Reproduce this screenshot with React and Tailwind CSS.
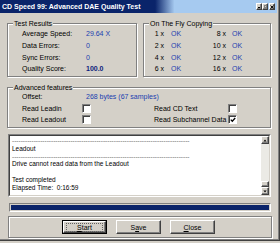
import React from 'react';

const Group = ({ label, className = '', children }) => (
  <div className={`relative border border-[#808080] shadow-[1px_1px_0_#ffffff,inset_1px_1px_0_#ffffff] ${className}`}>
    {label && (
      <span className="absolute left-[5px] top-[-5px] bg-[#d4d0c8] px-[1px] leading-[9px] whitespace-nowrap">{label}</span>
    )}
    {children}
  </div>
);

const Check = ({ checked }) => (
  <span className="w-[9px] h-[9px] bg-white border border-t-[#808080] border-l-[#808080] border-r-white border-b-white shadow-[inset_1px_1px_0_#404040] flex items-center justify-center">
    {checked && (
      <svg width="6" height="6" viewBox="0 0 6 6">
        <path d="M0.8 2.6 L2.3 4.2 L5.2 1" stroke="#000" strokeWidth="1.3" fill="none" />
      </svg>
    )}
  </span>
);

const Stat = ({ label, children }) => (
  <div className="flex items-center h-[11.7px]">
    <span className="w-[64px]">{label}</span>
    {children}
  </div>
);

const Speed = ({ a, b }) => (
  <div className="flex items-center h-[11.7px]">
    <span className="w-[20px] text-right">{a}</span>
    <span className="ml-[7px] w-[35px] text-[#2040b0]">OK</span>
    <span className="w-[20px] text-right">{b}</span>
    <span className="ml-[6px] text-[#2040b0]">OK</span>
  </div>
);

const Raised = ({ className = '', children }) => (
  <div className={`bg-[#d4d0c8] border border-t-white border-l-white border-r-[#404040] border-b-[#404040] shadow-[inset_-1px_-1px_0_#808080] flex items-center justify-center ${className}`}>
    {children}
  </div>
);

const dashes = '-'.repeat(82);

export default function App() {
  return (
    <div className="w-[280px] h-[243px] bg-[#d4d0c8] font-['Liberation_Sans',Arial,sans-serif] text-[7px] leading-[9px] text-black overflow-hidden">
      <div className="h-[241px] border-r border-b border-[#404040]">
        <div className="h-full border-r border-b border-[#808080] pr-[1px]">
          {/* title bar */}
          <div className="h-[13px] flex items-center pl-[2px] pr-[2px] bg-[linear-gradient(90deg,#0a246a_0%,#0a246a_56%,#a6caf0_63%,#a6caf0_100%)]">
            <span className="flex-1 text-white font-bold text-[7px] leading-none whitespace-nowrap">CD Speed 99: Advanced DAE Quality Test</span>
            <div className="flex items-center">
              <Raised className="w-[6px] h-[7px]">
                <span className="w-[2px] h-[1px] bg-black mt-[2px]" />
              </Raised>
              <Raised className="w-[6px] h-[7px]">
                <span className="w-[3px] h-[3px] border border-[#808080]" />
              </Raised>
              <Raised className="w-[6px] h-[7px] ml-[1px]">
                <svg width="4" height="4" viewBox="0 0 4 4">
                  <path d="M0.5 0.5 L3.5 3.5 M3.5 0.5 L0.5 3.5" stroke="#000" strokeWidth="0.9" />
                </svg>
              </Raised>
            </div>
          </div>

          {/* body */}
          <div className="pl-[7px] pr-[6px] pt-[10px] flex flex-col">
            <div className="flex gap-[6px]">
              <Group label="Test Results" className="w-[130px] h-[54px]">
                <div className="pt-[4px] pl-[14px] flex flex-col">
                  <Stat label="Average Speed:"><span className="text-[#2040b0]">29.64 X</span></Stat>
                  <Stat label="Data Errors:"><span className="text-[#2040b0]">0</span></Stat>
                  <Stat label="Sync Errors:"><span className="text-[#2040b0]">0</span></Stat>
                  <Stat label="Quality Score:"><span className="font-bold text-[#0c1c7c]">100.0</span></Stat>
                </div>
              </Group>
              <Group label="On The Fly Copying" className="flex-1 h-[54px]">
                <div className="pt-[4px] flex flex-col">
                  <Speed a="1 x" b="8 x" />
                  <Speed a="2 x" b="10 x" />
                  <Speed a="4 x" b="12 x" />
                  <Speed a="6 x" b="16 x" />
                </div>
              </Group>
            </div>

            <Group label="Advanced features" className="mt-[10px] h-[41px]">
              <div className="pt-[3px] flex flex-col">
                <div className="flex items-center h-[11.5px] pl-[14px]">
                  <span className="w-[64px]">Offset:</span>
                  <span className="text-[#2040b0]">268 bytes (67 samples)</span>
                </div>
                <div className="flex items-center h-[11.5px]">
                  <div className="w-[146px] flex items-center pl-[14px]">
                    <span className="w-[60px]">Read Leadin</span>
                    <Check />
                  </div>
                  <span className="w-[74px]">Read CD Text</span>
                  <Check />
                </div>
                <div className="flex items-center h-[11.5px]">
                  <div className="w-[146px] flex items-center pl-[14px]">
                    <span className="w-[60px]">Read Leadout</span>
                    <Check />
                  </div>
                  <span className="w-[74px]">Read Subchannel Data</span>
                  <Check checked />
                </div>
              </div>
            </Group>

            {/* log */}
            <div className="ml-[1px] mt-[6px] h-[63px] border border-t-[#808080] border-l-[#808080] border-r-white border-b-white">
              <div className="h-full border border-t-[#404040] border-l-[#404040] border-r-[#d4d0c8] border-b-[#d4d0c8] bg-white flex">
                <div className="flex-1 overflow-hidden pl-[2px] pt-[1px] text-[6.5px] leading-[7.8px] whitespace-nowrap">
                  <div className="text-[#707070]">{dashes}</div>
                  <div>Leadout</div>
                  <div className="text-[#707070]">{dashes}</div>
                  <div>Drive cannot read data from the Leadout</div>
                  <div>&nbsp;</div>
                  <div>Test completed</div>
                  <div>Elapsed Time:&nbsp; 0:16:59</div>
                </div>
                <div className="w-[8px] flex flex-col bg-[#ebeae5]">
                  <Raised className="h-[8px]">
                    <svg width="4" height="3" viewBox="0 0 4 3"><path d="M2 0.5 L3.6 2.5 L0.4 2.5 Z" fill="#000" /></svg>
                  </Raised>
                  <div className="flex-1" />
                  <Raised className="h-[6px]" />
                  <Raised className="h-[8px]">
                    <svg width="4" height="3" viewBox="0 0 4 3"><path d="M0.4 0.5 L3.6 0.5 L2 2.5 Z" fill="#000" /></svg>
                  </Raised>
                </div>
              </div>
            </div>

            {/* progress */}
            <div className="ml-[2px] mt-[6px] h-[9px] border border-t-[#808080] border-l-[#808080] border-r-white border-b-white p-[1px]">
              <div className="h-full bg-[#0a246a]" />
            </div>

            {/* buttons */}
            <Group className="ml-[1px] -mr-[1px] mt-[4px] h-[22px]">
              <div className="flex gap-[9px] pl-[53px] pt-[3px]">
                <div className="w-[45px] h-[14px] border border-black flex">
                  <Raised className="flex-1">
                    <span className="w-[37px] h-[9px] border border-dotted border-[#606060] flex items-center justify-center leading-none">
                      <span className="underline decoration-1 underline-offset-1">S</span>tart
                    </span>
                  </Raised>
                </div>
                <Raised className="w-[45px] h-[14px] leading-none">
                  <span>S<span className="underline decoration-1 underline-offset-1">a</span>ve</span>
                </Raised>
                <Raised className="w-[45px] h-[14px] leading-none">
                  <span><span className="underline decoration-1 underline-offset-1">C</span>lose</span>
                </Raised>
              </div>
            </Group>
          </div>
        </div>
      </div>
    </div>
  );
}
